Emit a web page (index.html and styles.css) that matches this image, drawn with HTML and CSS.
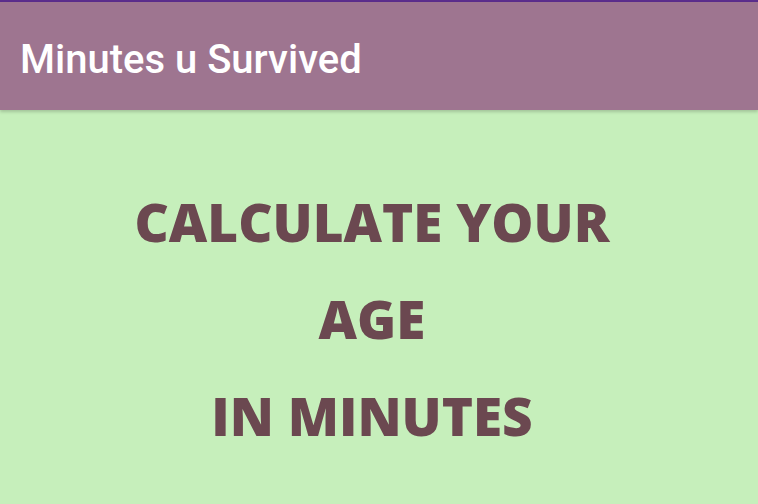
FILE: index.html
```html
<!DOCTYPE html>
<html>
<head>
<meta charset="utf-8">
<link rel="stylesheet" href="styles.css">
</head>
<body>
<div class="status"></div>
<header class="appbar"><span class="title">Minutes u Survived</span></header>
<main class="content">
  <div class="line">CALCULATE YOUR</div>
  <div class="line">AGE</div>
  <div class="line">IN MINUTES</div>
</main>
</body>
</html>
```
FILE: styles.css
```css
html, body { margin: 0; padding: 0; }
body {
  width: 758px;
  height: 504px;
  overflow: hidden;
  background: #c6efbb;
  display: flex;
  flex-direction: column;
}
.status { height: 2px; background: #5b2d8c; }
.appbar {
  height: 108px;
  background: #9e7590;
  display: flex;
  align-items: center;
  padding-left: 20px;
  box-shadow: 0 2px 3px rgba(0,0,0,0.18);
  position: relative;
  z-index: 1;
}
.title {
  font-family: Roboto, "Liberation Sans", sans-serif;
  font-weight: 500;
  font-size: 40px;
  color: #ffffff;
  margin-top: 6px;
}
.content {
  flex: 1;
  display: flex;
  flex-direction: column;
  align-items: center;
  padding-top: 63px;
  padding-right: 14px;
}
.line {
  font-family: "Open Sans", sans-serif;
  font-weight: 800;
  font-size: 53px;
  line-height: 97px;
  color: #6b4850;
  height: 97px;
  display: flex;
  align-items: center;
}
```
